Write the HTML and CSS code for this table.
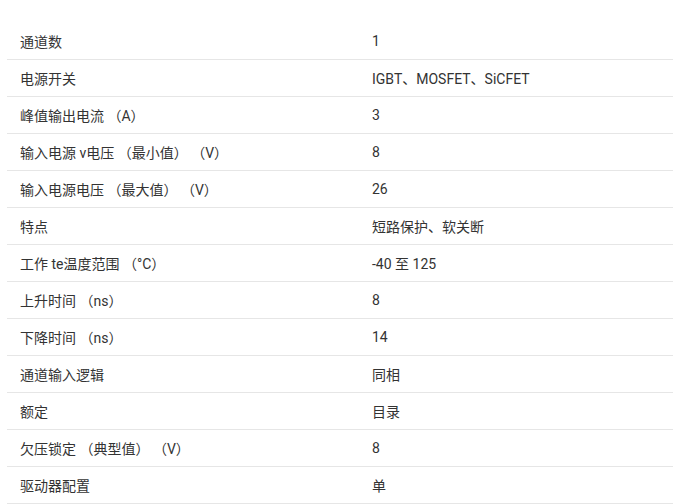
FILE: index.html
```html
<!DOCTYPE html>
<html lang="zh-CN">
<head>
<meta charset="utf-8">
<link rel="stylesheet" href="styles.css">
</head>
<body>
<div class="spec">
  <div class="row"><div class="k">通道数</div><div class="v">1</div></div>
  <div class="row"><div class="k">电源开关</div><div class="v">IGBT、MOSFET、SiCFET</div></div>
  <div class="row"><div class="k">峰值输出电流 （A）</div><div class="v">3</div></div>
  <div class="row"><div class="k">输入电源 v电压 （最小值） （V）</div><div class="v">8</div></div>
  <div class="row"><div class="k">输入电源电压 （最大值） （V）</div><div class="v">26</div></div>
  <div class="row"><div class="k">特点</div><div class="v">短路保护、软关断</div></div>
  <div class="row"><div class="k">工作 te温度范围 （°C）</div><div class="v">-40 至 125</div></div>
  <div class="row"><div class="k">上升时间 （ns）</div><div class="v">8</div></div>
  <div class="row"><div class="k">下降时间 （ns）</div><div class="v">14</div></div>
  <div class="row"><div class="k">通道输入逻辑</div><div class="v">同相</div></div>
  <div class="row"><div class="k">额定</div><div class="v">目录</div></div>
  <div class="row"><div class="k">欠压锁定 （典型值） （V）</div><div class="v">8</div></div>
  <div class="row"><div class="k">驱动器配置</div><div class="v">单</div></div>
</div>
</body>
</html>
```
FILE: styles.css
```css
html, body {
  margin: 0;
  padding: 0;
  background: #fff;
}
body {
  font-family: Roboto, "Noto Sans CJK SC", sans-serif;
  font-size: 14px;
  color: #333;
}
.spec {
  width: 666px;
  margin: 0 0 0 7px;
  padding-top: 23px;
}
.row {
  display: grid;
  grid-template-columns: 352px 1fr;
  height: 36px;
  align-items: center;
  border-bottom: 1px solid #e6e6e6;
}
.k, .v {
  padding-left: 13px;
  white-space: nowrap;
}
```
